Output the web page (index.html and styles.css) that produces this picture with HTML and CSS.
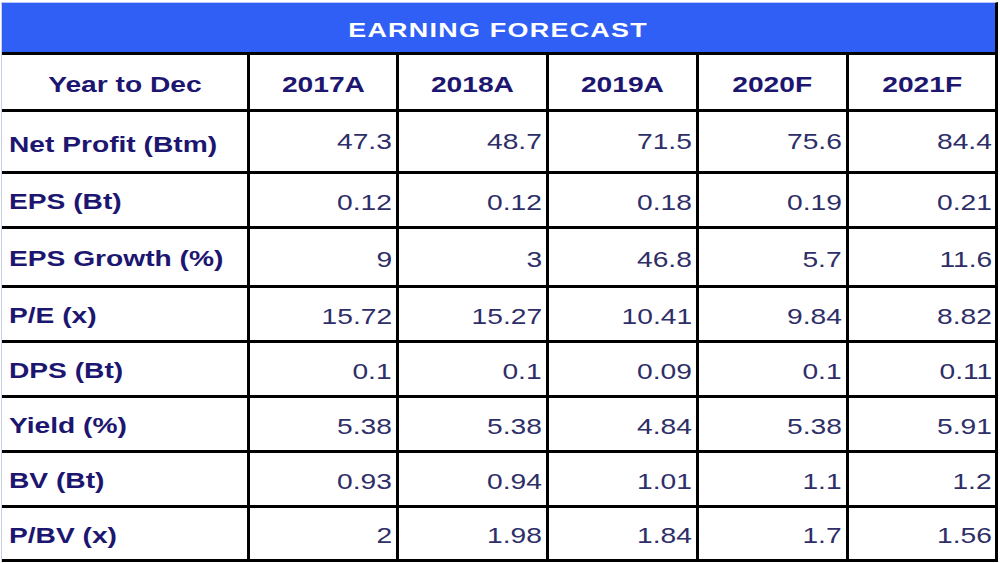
FILE: index.html
```html
<!DOCTYPE html>
<html lang="en">
<head>
<meta charset="utf-8">
<title>Earning Forecast</title>
<link rel="stylesheet" href="styles.css">
</head>
<body>
<div class="sheet">
  <div class="title"><span class="t">EARNING FORECAST</span></div>
  <div class="grid">
    <div class="cell head first"><span class="t">Year to Dec</span></div>
    <div class="cell head"><span class="t">2017A</span></div>
    <div class="cell head"><span class="t">2018A</span></div>
    <div class="cell head"><span class="t">2019A</span></div>
    <div class="cell head"><span class="t">2020F</span></div>
    <div class="cell head last"><span class="t">2021F</span></div>

    <div class="cell label top"><span class="t">Net Profit (Btm)</span></div>
    <div class="cell num top"><span class="t">47.3</span></div>
    <div class="cell num top"><span class="t">48.7</span></div>
    <div class="cell num top"><span class="t">71.5</span></div>
    <div class="cell num top"><span class="t">75.6</span></div>
    <div class="cell num top last"><span class="t">84.4</span></div>

    <div class="cell label"><span class="t">EPS (Bt)</span></div>
    <div class="cell num"><span class="t">0.12</span></div>
    <div class="cell num"><span class="t">0.12</span></div>
    <div class="cell num"><span class="t">0.18</span></div>
    <div class="cell num"><span class="t">0.19</span></div>
    <div class="cell num last"><span class="t">0.21</span></div>

    <div class="cell label"><span class="t">EPS Growth (%)</span></div>
    <div class="cell num"><span class="t">9</span></div>
    <div class="cell num"><span class="t">3</span></div>
    <div class="cell num"><span class="t">46.8</span></div>
    <div class="cell num"><span class="t">5.7</span></div>
    <div class="cell num last"><span class="t">11.6</span></div>

    <div class="cell label"><span class="t">P/E (x)</span></div>
    <div class="cell num"><span class="t">15.72</span></div>
    <div class="cell num"><span class="t">15.27</span></div>
    <div class="cell num"><span class="t">10.41</span></div>
    <div class="cell num"><span class="t">9.84</span></div>
    <div class="cell num last"><span class="t">8.82</span></div>

    <div class="cell label"><span class="t">DPS (Bt)</span></div>
    <div class="cell num"><span class="t">0.1</span></div>
    <div class="cell num"><span class="t">0.1</span></div>
    <div class="cell num"><span class="t">0.09</span></div>
    <div class="cell num"><span class="t">0.1</span></div>
    <div class="cell num last"><span class="t">0.11</span></div>

    <div class="cell label"><span class="t">Yield (%)</span></div>
    <div class="cell num"><span class="t">5.38</span></div>
    <div class="cell num"><span class="t">5.38</span></div>
    <div class="cell num"><span class="t">4.84</span></div>
    <div class="cell num"><span class="t">5.38</span></div>
    <div class="cell num last"><span class="t">5.91</span></div>

    <div class="cell label"><span class="t">BV (Bt)</span></div>
    <div class="cell num"><span class="t">0.93</span></div>
    <div class="cell num"><span class="t">0.94</span></div>
    <div class="cell num"><span class="t">1.01</span></div>
    <div class="cell num"><span class="t">1.1</span></div>
    <div class="cell num last"><span class="t">1.2</span></div>

    <div class="cell label"><span class="t">P/BV (x)</span></div>
    <div class="cell num"><span class="t">2</span></div>
    <div class="cell num"><span class="t">1.98</span></div>
    <div class="cell num"><span class="t">1.84</span></div>
    <div class="cell num"><span class="t">1.7</span></div>
    <div class="cell num last"><span class="t">1.56</span></div>
  </div>
</div>
</body>
</html>
```

FILE: styles.css
```css
* { box-sizing: border-box; }

html, body {
  margin: 0;
  padding: 0;
  background: #ffffff;
}

body {
  width: 1000px;
  height: 563px;
  overflow: hidden;
  font-family: "Liberation Sans", Arial, sans-serif;
}

.sheet {
  margin: 2px 2px 0 1px;
  width: 997px;
  border-top: 1px solid #b9c8f2;
  border-left: 1px solid #c9d0e2;
  border-right: 3px solid #000;
}

.title {
  height: 52px;
  background: #2f5ff5;
  border-bottom: 3px solid #000;
  display: flex;
  align-items: center;
  justify-content: center;
  padding-top: 4px;
  color: #ffffff;
  font-weight: bold;
  font-size: 21px;
  letter-spacing: 1px;
}

.t {
  display: inline-block;
  transform: scaleX(1.28);
  white-space: nowrap;
}

.title .t { transform-origin: center; }

.grid {
  display: grid;
  grid-template-columns: 248px 149px 150px 150px 150px 146px;
  grid-template-rows: 57px 62px 55px 59px 55px 55px 55px 55px 54px;
}

.cell {
  display: flex;
  align-items: center;
  border-right: 3px solid #000;
  border-bottom: 3px solid #000;
  font-size: 22px;
}

.cell.last { border-right: none; }

.head {
  justify-content: center;
  font-weight: bold;
  color: #1d1670;
  padding-top: 5px;
}

.head .t { transform-origin: center; }

.label {
  justify-content: flex-start;
  padding-left: 7px;
  padding-top: 4px;
  font-weight: bold;
  color: #1d1670;
}

.label.top { padding-top: 6px; }

.label .t { transform-origin: left center; }

.num {
  justify-content: flex-end;
  padding-right: 4px;
  padding-top: 5px;
  color: #2e2e68;
}

.num.top { padding-top: 0; }

.num.last { padding-right: 3px; }

.num .t { transform-origin: right center; }
```
